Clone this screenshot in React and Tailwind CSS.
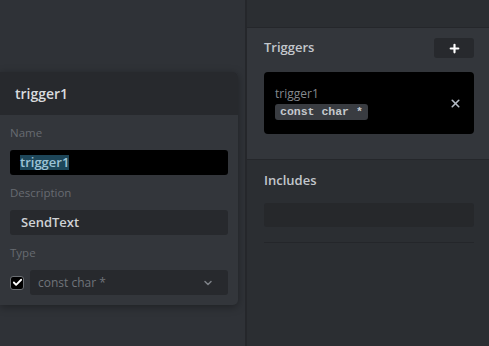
import { Plus, X, ChevronDown, Check } from "lucide-react";

const font = { fontFamily: '"Open Sans", "Noto Sans", sans-serif' };

function Field({ label, children }) {
  return (
    <div className="flex flex-col">
      <div className="h-[14px] mb-[10px] text-[11.5px] leading-[14px] text-[#676b71]">{label}</div>
      {children}
    </div>
  );
}

function TriggerEditor() {
  return (
    <div className="w-[238px] rounded-r-[5px] bg-[#33363b] shadow-[0_2px_8px_rgba(0,0,0,0.35)] overflow-hidden">
      <div className="h-[43px] flex items-center px-[15px] bg-[#27292d] text-[14px] font-semibold text-[#d9dbde]">
        trigger1
      </div>
      <div className="flex flex-col gap-[11px] px-[10px] pt-[11px] pb-[10px]">
        <Field label="Name">
          <div className="h-[25px] rounded-[3px] bg-black flex items-center px-[10px]">
            <span className="bg-[#1d4659] text-[#9cc3d6] text-[13px] leading-[15px] font-semibold">trigger1</span>
          </div>
        </Field>
        <Field label="Description">
          <div className="h-[25px] rounded-[3px] bg-[#27292d] flex items-center px-[11px] text-[13px] font-semibold text-[#cfd2d6]">
            SendText
          </div>
        </Field>
        <Field label="Type">
          <div className="flex items-center gap-[6px]">
            <div className="w-[14px] h-[14px] rounded-[3px] bg-black border border-[#6b6f74] flex items-center justify-center">
              <Check size={11} strokeWidth={4} className="text-white" />
            </div>
            <div className="flex-1 h-[25px] rounded-[3px] bg-[#27292d] flex items-center justify-between px-[8px] text-[12px] text-[#70747a]">
              <span>const char *</span>
              <ChevronDown size={12} strokeWidth={3} className="text-[#7d8187] mr-[6px]" />
            </div>
          </div>
        </Field>
      </div>
    </div>
  );
}

export default function App() {
  return (
    <div className="w-[489px] h-[346px] flex bg-[#2f3237] overflow-hidden" style={font}>
      <div className="w-[245px] pt-[72px]">
        <TriggerEditor />
      </div>
      <div className="flex-1 flex flex-col border-l-2 border-[#25272b] bg-[#2b2e32]">
        <div className="h-[28px] border-b border-[#25272b] bg-[#2b2e32]" />
        <div className="bg-[#33363b] pl-[17px] pr-[15px] pt-[10px] pb-[25px] border-b border-[#25272b]">
          <div className="h-[20px] flex items-center justify-between">
            <span className="text-[13px] font-semibold text-[#c3c7cc]">Triggers</span>
            <button className="w-[40px] h-[20px] rounded-[3px] bg-[#27292d] flex items-center justify-center">
              <Plus size={13} strokeWidth={4} className="text-white" />
            </button>
          </div>
          <div className="mt-[14px] h-[62px] rounded-[4px] bg-black flex items-center justify-between pl-[11px] pr-[12px]">
            <div className="flex flex-col gap-[3px] pt-[1px]">
              <span className="text-[12px] leading-[14px] text-[#85898e]">trigger1</span>
              <span className="self-start rounded-[3px] bg-[#393c41] px-[5px] h-[16px] flex items-center text-[11.5px] font-bold text-[#c5c9cd]" style={{ fontFamily: '"Liberation Mono", monospace' }}>
                const char *
              </span>
            </div>
            <X size={13} strokeWidth={3} className="text-[#b3bac4]" />
          </div>
        </div>
        <div className="pl-[17px] pr-[15px] pt-[12px]">
          <div className="h-[17px] flex items-center text-[13px] font-semibold text-[#c3c7cc]">Includes</div>
          <div className="mt-[14px] h-[24px] rounded-[3px] bg-[#26282b]" />
          <div className="mt-[15px] h-px bg-[#24262a]" />
        </div>
      </div>
    </div>
  );
}
